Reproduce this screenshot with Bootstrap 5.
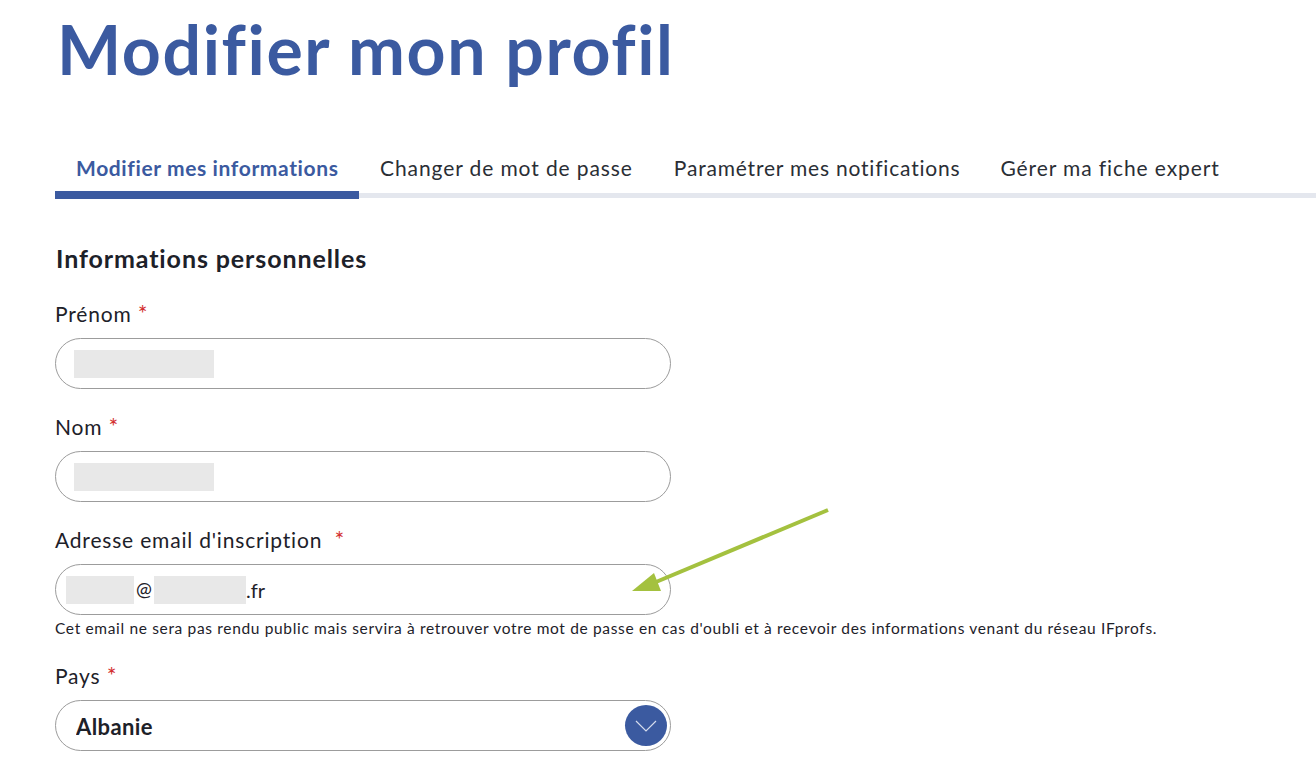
<!doctype html>
<html lang="fr">
<head>
<meta charset="utf-8">
<title>Modifier mon profil</title>
<link href="https://cdn.jsdelivr.net/npm/bootstrap@5.3.0/dist/css/bootstrap.min.css" rel="stylesheet">
<style>
html,body{height:782px;overflow:hidden;background:#fff}
body{font-family:"Lato","Noto Sans",sans-serif;color:#1d2129;padding-left:55px;position:relative}
.page-title{font-size:68px;line-height:80px;font-weight:700;color:#3b5aa0;margin:9px 0 0 2px;letter-spacing:1.6px}
.tab-row{margin-top:61px;border-bottom:5px solid #e4e7ee;height:48px;flex-wrap:nowrap}
.tab-row .nav-link{font-size:21px;line-height:28px;color:#2a2e35;padding:4px 21px 0;height:43px;letter-spacing:.9px;border-radius:0;white-space:nowrap}
.tab-row .nav-link.tab-second{padding-right:20px}
.tab-row .nav-link.tab-long{letter-spacing:.8px}
.tab-row .nav-link.tab-last{padding-left:19px}
.tab-row .nav-link.active{color:#3b5aa0;font-weight:700;border-bottom:8px solid #3b5aa0;height:49px;margin-bottom:-6px;letter-spacing:.62px;padding-left:21px;padding-right:18px;width:304px}
.sec-title{font-size:25px;line-height:30px;font-weight:700;margin:45px 0 0 1px;letter-spacing:.9px}
.fld-label{display:block;font-size:21px;line-height:28px;margin:0 0 10px;letter-spacing:.81px}
.fld-label span{color:#d32f2f;font-size:23px;line-height:0}
.fld-box{width:616px;height:51px;border:1.5px solid #9c9c9c;border-radius:26px;font-size:20px;display:flex;align-items:center;background:#fff;color:#1d2129;padding:0}
.fld-group{margin-bottom:24px}
.mask{background:#e8e8e8;height:28px;display:block}
.mask-a{width:140px;margin-left:18px}
.mask-b{width:68px;margin-left:10px}
.mask-c{width:92px}
.at{width:20px;text-align:center;font-size:19px}
.help{font-size:15.5px;line-height:20px;margin:3px 0 0;white-space:nowrap;letter-spacing:.66px}
.sel-wrap{position:relative;width:616px}
.form-select.fld-box{font-weight:700;font-size:22px;padding:2px 0 0 20px;background-image:none;box-shadow:none;letter-spacing:.4px}
.sel-btn{position:absolute;right:4px;top:5px;width:42px;height:41px;border-radius:50%;background:#3b5aa0;display:flex;align-items:center;justify-content:center;pointer-events:none}
.arrow-over{position:absolute;left:0;top:0;width:1316px;height:782px;pointer-events:none}
.fld-form{margin-top:27px}
</style>
</head>
<body>
<h1 class="page-title">Modifier mon profil</h1>
<ul class="nav tab-row">
  <li class="nav-item"><a class="nav-link active" href="#">Modifier mes informations</a></li>
  <li class="nav-item"><a class="nav-link tab-second" href="#">Changer de mot de passe</a></li>
  <li class="nav-item"><a class="nav-link tab-long" href="#">Paramétrer mes notifications</a></li>
  <li class="nav-item"><a class="nav-link tab-last" href="#">Gérer ma fiche expert</a></li>
</ul>
<h2 class="sec-title">Informations personnelles</h2>
<form class="fld-form">
  <div class="fld-group">
    <label class="fld-label">Prénom <span>*</span></label>
    <div class="fld-box"><i class="mask mask-a"></i></div>
  </div>
  <div class="fld-group">
    <label class="fld-label">Nom <span>*</span></label>
    <div class="fld-box"><i class="mask mask-a"></i></div>
  </div>
  <div class="fld-group">
    <label class="fld-label">Adresse email d'inscription &nbsp;<span>*</span></label>
    <div class="fld-box"><i class="mask mask-b"></i><span class="at">@</span><i class="mask mask-c"></i><span>.fr</span></div>
    <p class="help">Cet email ne sera pas rendu public mais servira à retrouver votre mot de passe en cas d'oubli et à recevoir des informations venant du réseau IFprofs.</p>
  </div>
  <div class="fld-group">
    <label class="fld-label">Pays <span>*</span></label>
    <div class="sel-wrap">
      <select class="form-select fld-box"><option>Albanie</option></select>
      <div class="sel-btn"><svg width="22" height="12" viewBox="0 0 22 12" fill="none" stroke="#d5dcec" stroke-width="1.2"><path d="M1 1l10 10L21 1"/></svg></div>
    </div>
  </div>
</form>
<svg class="arrow-over" viewBox="0 0 1316 782">
  <path d="M828 510L656 582" stroke="#a4c13f" stroke-width="4" fill="none"/>
  <path d="M632 591L654 573L661 591Z" fill="#a4c13f"/>
</svg>
</body>
</html>
